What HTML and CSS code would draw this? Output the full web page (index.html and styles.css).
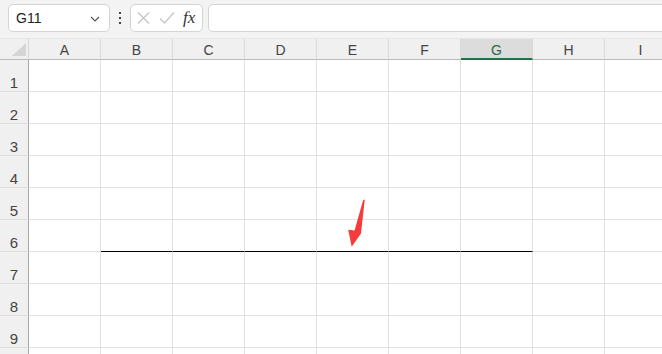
FILE: index.html
```html
<!DOCTYPE html>
<html lang="en">
<head>
  <meta charset="UTF-8" />
  <title>Sheet</title>
  <link rel="stylesheet" href="styles.css">
</head>
<body>

  <div class="toolbar">
    <div class="name-box">
      <span>G11</span>
      <svg class="chevron" width="10" height="6" viewBox="0 0 10 6"><path d="M1 1 L5 5 L9 1" fill="none" stroke="#555" stroke-width="1.2"/></svg>
    </div>
    <div class="dots"><i></i><i></i><i></i></div>
    <div class="fx-box">
      <svg width="13" height="12" viewBox="0 0 13 12"><path d="M1 0.5 L12 11.5 M12 0.5 L1 11.5" stroke="#c6c6c6" stroke-width="1.3" fill="none"/></svg>
      <svg width="16" height="12" viewBox="0 0 16 12"><path d="M1 6.5 L5.5 11 L15 0.5" stroke="#c6c6c6" stroke-width="1.3" fill="none"/></svg>
      <span class="fx">fx</span>
    </div>
    <div class="formula-input"></div>
  </div>

  <div class="sheet">
    <div class="grid" id="grid"></div>
    <svg class="arrow" width="30" height="54" viewBox="0 0 30 54">
      <polygon points="24.8,3.2 21,37.5 11.7,50.7 8.2,33.8 14.6,34.6 23,4.5" fill="#f73b3b"/>
    </svg>
  </div>

  <script>
    // Build the spreadsheet grid: header row + 10 rows, 9 columns
    const cols = ["A", "B", "C", "D", "E", "F", "G", "H", "I"];
    const grid = document.getElementById("grid");

    function cell(cls, text) {
      const div = document.createElement("div");
      div.className = cls;
      if (text) div.innerHTML = "<span>" + text + "</span>";
      grid.appendChild(div);
    }

    cell("corner");
    cols.forEach((c) => cell(c === "G" ? "col-head selected" : "col-head", c));

    for (let r = 1; r <= 10; r++) {
      // row 10 only peeks in at the bottom edge, its label is out of view
      cell("row-head", r < 10 ? r : "");
      cols.forEach((c, i) => {
        // black bottom border on B6:G6
        const underline = r === 6 && i >= 1 && i <= 6;
        cell(underline ? "cell underline" : "cell");
      });
    }
  </script>
</body>
</html>
```

FILE: styles.css
```css
* { box-sizing: border-box; }
body { margin: 0; background: #fff; font-family: "Liberation Sans", Arial, sans-serif; overflow: hidden; width: 662px; height: 354px; }

.toolbar {
  display: flex; align-items: center; height: 38px;
  background: #f3f3f3; padding: 4px 0 6px 8px;
}
.name-box {
  width: 102px; height: 28px; background: white;
  border: 1px solid #d4d4d4; border-radius: 5px;
  display: flex; align-items: center; justify-content: space-between;
  padding: 0 9px 0 7px; font-size: 14px; color: #222;
}
.chevron { margin-top: 1px; }
.dots { width: 20px; display: flex; flex-direction: column; align-items: center; gap: 3px; }
.dots i { width: 2px; height: 2px; background: #444; display: block; }
.fx-box {
  width: 73px; height: 28px; background: white;
  border: 1px solid #d4d4d4; border-radius: 5px;
  display: flex; align-items: center; gap: 9px; padding-left: 6px;
}
.fx { font-family: "Liberation Serif", "Times New Roman", serif; font-style: italic; font-size: 17px; color: #333; margin-left: -1px; }
.formula-input {
  flex: 1; height: 28px; margin-left: 5px; margin-right: -6px; background: white;
  border: 1px solid #d4d4d4; border-radius: 5px;
}

.sheet { position: relative; overflow: hidden; height: 316px; }
.grid {
  display: grid; width: 677px;
  grid-template-columns: 29px repeat(9, 72px);
  grid-template-rows: 22px;
  grid-auto-rows: 32px;
}
.corner, .col-head {
  background: #f0f0f0; border-bottom: 1px solid #b9b9b9;
  border-top: 1px solid #e6e6e6;
}
.corner { border-right: 1px solid #d6d6d6; position: relative; }
.corner::after {
  content: ""; position: absolute; right: 2px; bottom: 3px;
  border-left: 14px solid transparent; border-bottom: 13px solid #d5d5d5;
}
.col-head {
  border-right: 1px solid #dadada;
  display: flex; justify-content: center; align-items: flex-end;
  font-size: 14px; color: #444; line-height: 14px; padding-bottom: 2px;
}
.col-head.selected {
  background: #dcdcdc; color: #1f6b45;
  border-bottom: 2px solid #217346; padding-bottom: 1px;
}
.row-head {
  background: #f0f0f0; border-right: 1px solid #a6a6a6; border-bottom: 1px solid #dedede;
  display: flex; justify-content: center; align-items: flex-end;
  font-size: 15px; color: #444; line-height: 15px; padding-bottom: 1px;
}
.cell { border-right: 1px solid #e1e1e1; border-bottom: 1px solid #e1e1e1; }
.cell.underline { border-bottom: 1px solid #000; }

.arrow { position: absolute; left: 340px; top: 158px; }
```
